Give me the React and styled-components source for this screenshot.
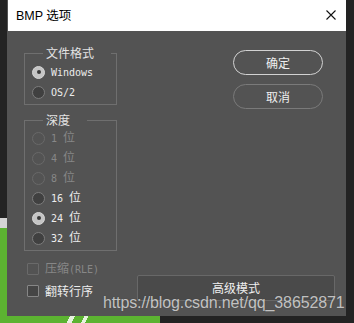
import React from "react";
import styled, { createGlobalStyle } from "styled-components";

const CJK = `"Noto Sans CJK SC", "Noto Sans", sans-serif`;
const MONO = `"DejaVu Sans Mono", "Liberation Mono", monospace`;

const GlobalStyle = createGlobalStyle`
  html, body { margin: 0; padding: 0; background: #232323; }
  body { width: 354px; height: 323px; overflow: hidden; }
`;

const Page = styled.div`
  position: relative;
  width: 354px;
  height: 323px;
  box-sizing: border-box;
  padding-left: 7px;
  background:
    linear-gradient(118deg, transparent 35%, #e8f2e0 35%, #e8f2e0 62%, transparent 62%) 64px 316px / 14px 7px no-repeat,
    linear-gradient(118deg, transparent 35%, #e8f2e0 35%, #e8f2e0 62%, transparent 62%) 79px 316px / 12px 7px no-repeat,
    linear-gradient(#d4d4d4, #d4d4d4) 0 218px / 7px 10px no-repeat,
    linear-gradient(#5cb331, #5cb331) 0 228px / 7px 95px no-repeat,
    linear-gradient(#5cb331, #5cb331) 0 316px / 160px 7px no-repeat,
    #232323;
`;

const Dialog = styled.div`
  width: 339px;
  height: 316px;
  display: flex;
  flex-direction: column;
  background: #535353;
`;

const TitleBar = styled.div`
  height: 31px;
  flex: none;
  box-sizing: border-box;
  margin-left: 1px;
  padding: 0 10px 0 8px;
  display: flex;
  align-items: center;
  justify-content: space-between;
  background: #ffffff;
  color: #000;
  font: 12.5px/16px "Liberation Sans", ${CJK};
`;

const CloseIcon = styled.svg`
  width: 10px;
  height: 10px;
  margin-top: -2px;
  display: block;
`;

const Body = styled.div`
  flex: 1;
  display: flex;
  flex-direction: column;
  padding: 15px 11px 14px 17px;
`;

const Main = styled.div`
  display: flex;
  justify-content: space-between;
  align-items: flex-start;
`;

const LeftCol = styled.div`
  display: flex;
  flex-direction: column;
  gap: 8px;
`;

const Group = styled.fieldset`
  margin: 0;
  width: 93px;
  min-width: 0;
  box-sizing: border-box;
  padding: ${(p) => p.$padTop}px 0 2px 7px;
  border: 1px solid #6f6f6f;
`;

const Legend = styled.legend`
  margin-left: 11px;
  padding: 0 17px 0 3px;
  font: 12px/14px ${CJK};
  color: #e4e4e4;
`;

const OptionRow = styled.div`
  height: 20px;
  display: flex;
  align-items: center;
  gap: 6px;
  color: ${(p) => (p.$disabled ? "#878787" : "#ececec")};
`;

const RadioCircle = styled.span`
  width: 13px;
  height: 13px;
  flex: none;
  box-sizing: border-box;
  border-radius: 50%;
  display: grid;
  place-items: center;
  border: 1px solid
    ${(p) => (p.$disabled ? "#696969" : p.$checked ? "#d6d6d6" : "#7c7c7c")};
  background: ${(p) =>
    p.$disabled ? "transparent" : p.$checked ? "#c5c5c5" : "#404040"};
  &::after {
    content: "";
    width: 4px;
    height: 4px;
    border-radius: 50%;
    background: #3a3a3a;
    display: ${(p) => (p.$checked ? "block" : "none")};
  }
`;

const Label = styled.span`
  white-space: pre;
  line-height: 14px;
`;

const Mono = styled.span`
  font: 10px/14px ${MONO};
`;

const Han = styled.span`
  font: 12px/14px ${CJK};
`;

const PillCol = styled.div`
  display: flex;
  flex-direction: column;
  gap: 9px;
  margin: 4px 12px 0 0;
`;

const Pill = styled.button`
  width: 90px;
  height: 25px;
  box-sizing: border-box;
  padding: 0;
  border-radius: 13px;
  border: ${(p) => (p.$primary ? "1.5px solid #d2d2d2" : "1px solid #7a7a7a")};
  background: #535353;
  color: #efefef;
  font: 12px/14px ${CJK};
`;

const Footer = styled.div`
  margin-top: 7px;
  display: flex;
  justify-content: space-between;
  align-items: flex-end;
`;

const Checks = styled.div`
  display: flex;
  flex-direction: column;
  margin-left: 3px;
`;

const CheckRow = styled.div`
  height: 22px;
  display: flex;
  align-items: center;
  gap: 6px;
  color: ${(p) => (p.$disabled ? "#878787" : "#ececec")};
`;

const CheckBox = styled.span`
  width: 12px;
  height: 12px;
  flex: none;
  box-sizing: border-box;
  border-radius: 1px;
  border: 1px solid ${(p) => (p.$disabled ? "#6a6a6a" : "#868686")};
  background: ${(p) => (p.$disabled ? "transparent" : "#454545")};
`;

const AdvancedButton = styled.button`
  width: 198px;
  height: 26px;
  margin-bottom: 1px;
  padding: 0;
  box-sizing: border-box;
  border: 1px solid #686868;
  border-radius: 2px;
  background: #4a4a4a;
  color: #efefef;
  font: 12px/14px ${CJK};
`;

const Watermark = styled.div`
  position: absolute;
  left: 103px;
  top: 294px;
  font: 16px/18px "Liberation Sans", Arial, sans-serif;
  letter-spacing: -0.12px;
  color: rgba(255, 255, 255, 0.7);
  text-shadow: 0 0 1px rgba(0, 0, 0, 0.35);
  white-space: nowrap;
`;

const Radio = ({ checked, disabled, mono, han }) => (
  <OptionRow $disabled={disabled}>
    <RadioCircle $checked={checked} $disabled={disabled} />
    <Label>
      <Mono>{mono}</Mono>
      {han && <Han>{han}</Han>}
    </Label>
  </OptionRow>
);

const depths = [
  { mono: "1 ", disabled: true },
  { mono: "4 ", disabled: true },
  { mono: "8 ", disabled: true },
  { mono: "16 " },
  { mono: "24 ", checked: true },
  { mono: "32 " },
];

export default function App() {
  return (
    <>
      <GlobalStyle />
      <Page>
        <Dialog>
          <TitleBar>
            <span>BMP 选项</span>
            <CloseIcon viewBox="0 0 10 10">
              <path d="M0.5 0.5 L9.5 9.5 M9.5 0.5 L0.5 9.5" stroke="#111" strokeWidth="1.1" fill="none" />
            </CloseIcon>
          </TitleBar>
          <Body>
            <Main>
              <LeftCol>
                <Group $padTop={2}>
                  <Legend>文件格式</Legend>
                  <Radio checked mono="Windows" />
                  <Radio mono="OS/2" />
                </Group>
                <Group $padTop={1}>
                  <Legend>深度</Legend>
                  {depths.map((d) => (
                    <Radio key={d.mono} mono={d.mono} han="位" checked={d.checked} disabled={d.disabled} />
                  ))}
                </Group>
              </LeftCol>
              <PillCol>
                <Pill $primary>确定</Pill>
                <Pill>取消</Pill>
              </PillCol>
            </Main>
            <Footer>
              <Checks>
                <CheckRow $disabled>
                  <CheckBox $disabled />
                  <Label>
                    <Han>压缩</Han>
                    <Mono>(RLE)</Mono>
                  </Label>
                </CheckRow>
                <CheckRow>
                  <CheckBox />
                  <Label>
                    <Han>翻转行序</Han>
                  </Label>
                </CheckRow>
              </Checks>
              <AdvancedButton>高级模式</AdvancedButton>
            </Footer>
          </Body>
        </Dialog>
        <Watermark>https://blog.csdn.net/qq_38652871</Watermark>
      </Page>
    </>
  );
}
